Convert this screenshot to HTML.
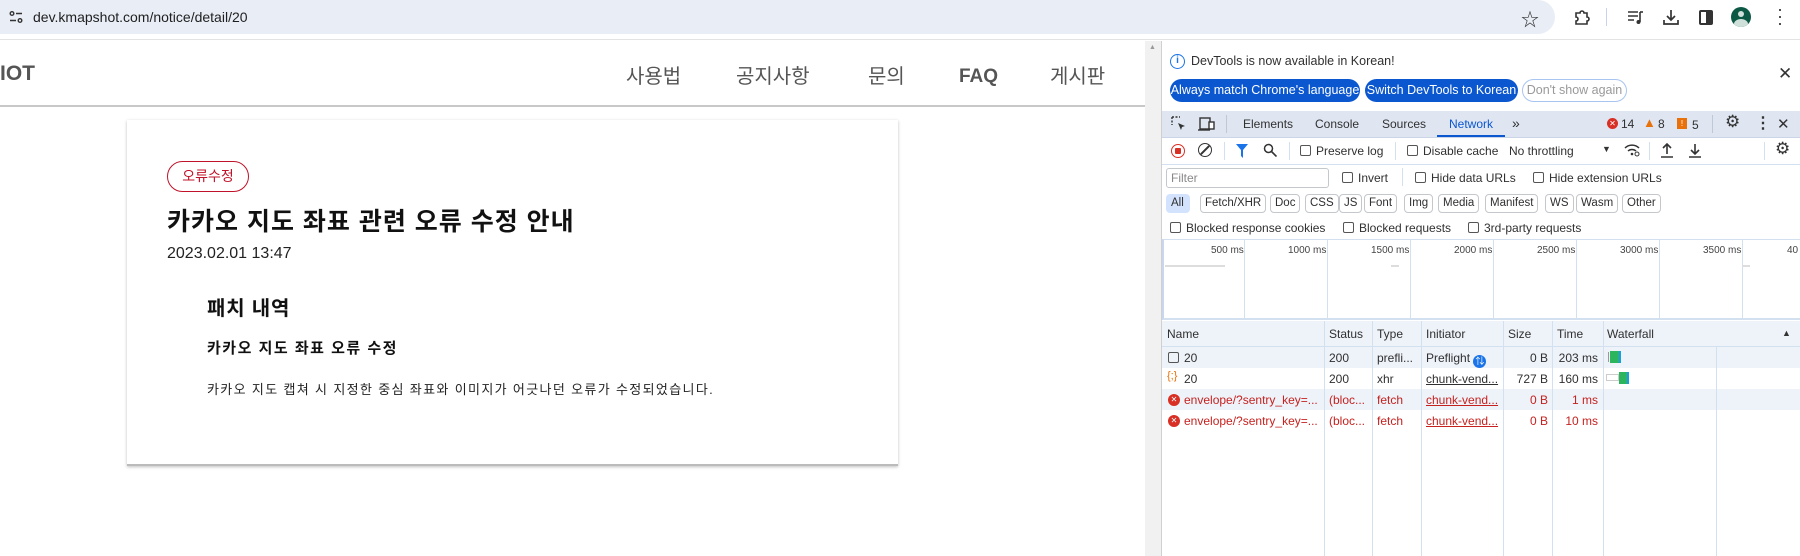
<!DOCTYPE html>
<html><head><meta charset="utf-8"><style>
*{box-sizing:border-box;margin:0;padding:0}
body{width:1800px;height:556px;overflow:hidden;background:#fff;font-family:"Liberation Sans","Noto Sans CJK KR",sans-serif;position:relative}
.a{position:absolute;white-space:nowrap}
.dt{font-family:"Liberation Sans","Noto Sans CJK KR",sans-serif;font-size:12px;color:#303030}
.cb{display:inline-block;width:11px;height:11px;border:1px solid #555;border-radius:2px;vertical-align:-1px;margin-right:5px}
.chip{position:absolute;top:194px;height:19px;border:1px solid #c4c7cc;border-radius:4px;font-size:11.5px;line-height:17px;padding:0 4px;color:#303030}
.vl{position:absolute;width:1px;background:#d3e0f0}
</style></head><body>
<!-- chrome top -->
<div class="a" style="left:0;top:0;width:1800px;height:40px;background:#fff;border-bottom:1px solid #e3e3e3"></div>
<div class="a" style="left:0;top:0;width:1555px;height:34px;background:#e9edf6;border-radius:0 17px 17px 0"></div>
<svg class="a" style="left:9px;top:10px" width="14" height="14" viewBox="0 0 14 14"><circle cx="3" cy="3.5" r="1.8" fill="none" stroke="#333" stroke-width="1.4"/><line x1="7" y1="3.5" x2="13" y2="3.5" stroke="#333" stroke-width="1.5"/><line x1="1" y1="10.5" x2="7" y2="10.5" stroke="#333" stroke-width="1.5"/><circle cx="11" cy="10.5" r="1.8" fill="none" stroke="#333" stroke-width="1.4"/></svg>
<div class="a" style="left:33px;top:9px;font-size:14px;color:#1f1f1f">dev.kmapshot.com/notice/detail/20</div>
<div class="a" style="left:1521px;top:6px;font-size:18px;color:#333">☆</div>
<svg class="a" style="left:1573px;top:9px" width="18" height="18" viewBox="0 0 18 18"><path d="M3 4h4a2 2 0 014 0h3v4a2 2 0 010 4v3H3v-3a2 2 0 000-4z" fill="none" stroke="#333" stroke-width="1.6"/></svg>
<div class="a" style="left:1606px;top:8px;width:1px;height:18px;background:#c8d3ea"></div>
<svg class="a" style="left:1627px;top:10px" width="18" height="16" viewBox="0 0 18 16"><path d="M1 2h10M1 6h10M1 10h6" stroke="#333" stroke-width="1.6"/><path d="M13 2v10" stroke="#333" stroke-width="1.6"/><circle cx="11.5" cy="12" r="2" fill="#333"/><path d="M13 2h3" stroke="#333" stroke-width="1.6"/></svg>
<svg class="a" style="left:1662px;top:8px" width="18" height="18" viewBox="0 0 18 18"><path d="M9 2v10M5 8l4 4 4-4M2 12v4h14v-4" fill="none" stroke="#333" stroke-width="1.7"/></svg>
<div class="a" style="left:1699px;top:10px;width:14px;height:15px;border:2px solid #333;border-radius:2px;background:linear-gradient(90deg,#fff 50%,#333 50%)"></div>
<div class="a" style="left:1731px;top:7px;width:20px;height:20px;border-radius:50%;background:#0b5844;overflow:hidden"><div style="position:absolute;left:7px;top:4px;width:6px;height:6px;border-radius:50%;background:#cfe0da"></div><div style="position:absolute;left:3px;top:12px;width:14px;height:10px;border-radius:50%;background:#cfe0da"></div></div>
<div class="a" style="left:1777px;top:6px;font-size:18px;line-height:7px;color:#333;width:4px">·<br>·<br>·</div>

<!-- page -->
<div class="a" style="left:0;top:62px;font-size:21px;font-weight:bold;color:#555">IOT</div>
<div class="a" style="left:626px;top:60px;font-size:20px;color:#555">사용법</div>
<div class="a" style="left:736px;top:60px;font-size:20px;color:#555">공지사항</div>
<div class="a" style="left:868px;top:60px;font-size:20px;color:#555">문의</div>
<div class="a" style="left:959px;top:66px;font-size:19px;font-weight:bold;color:#555">FAQ</div>
<div class="a" style="left:1050px;top:60px;font-size:20px;color:#555">게시판</div>
<div class="a" style="left:0;top:105px;width:1145px;height:2px;background:#c8c8c8"></div>
<div class="a" style="left:127px;top:120px;width:771px;height:346px;background:#fff;box-shadow:0 1px 3px rgba(0,0,0,.25);border-bottom:2px solid #bbb"></div>
<div class="a" style="left:167px;top:161px;width:82px;height:31px;border:1px solid #c0122a;border-radius:16px;color:#c0122a;font-size:14px;text-align:center;line-height:29px">오류수정</div>
<div class="a" style="left:167px;top:202px;font-size:25px;font-weight:bold;color:#111;letter-spacing:1px">카카오 지도 좌표 관련 오류 수정 안내</div>
<div class="a" style="left:167px;top:245px;font-size:16px;color:#222">2023.02.01 13:47</div>
<div class="a" style="left:207px;top:292px;font-size:20px;font-weight:bold;color:#111;letter-spacing:0.8px">패치 내역</div>
<div class="a" style="left:207px;top:337px;font-size:15px;font-weight:bold;color:#111;letter-spacing:1.5px">카카오 지도 좌표 오류 수정</div>
<div class="a" style="left:207px;top:379px;font-size:13px;color:#222;letter-spacing:1.35px">카카오 지도 캡쳐 시 지정한 중심 좌표와 이미지가 어긋나던 오류가 수정되었습니다.</div>
<div class="a" style="left:1145px;top:41px;width:16px;height:515px;background:#f1f1f1"></div>
<div class="a" style="left:1149px;top:44px;font-size:7px;color:#999">▲</div>

<!-- devtools -->
<div class="a dt" style="left:1161px;top:41px;width:639px;height:515px;background:#fff;border-left:1px solid #d0d0d0"></div>
<div class="a" style="left:1170px;top:54px;width:15px;height:15px;border:1.5px solid #1a73e8;border-radius:50%;color:#1a73e8;font-size:10px;text-align:center;line-height:12px;font-weight:bold">i</div>
<div class="a dt" style="left:1191px;top:54px;font-size:12.5px">DevTools is now available in Korean!</div>
<div class="a" style="left:1170px;top:79px;width:190px;height:23px;background:#0b57d0;border-radius:12px;color:#fff;font-size:12.5px;line-height:23px;text-align:center">Always match Chrome's language</div>
<div class="a" style="left:1365px;top:79px;width:153px;height:23px;background:#0b57d0;border-radius:12px;color:#fff;font-size:12.5px;line-height:23px;text-align:center">Switch DevTools to Korean</div>
<div class="a" style="left:1522px;top:79px;width:105px;height:23px;border:1px solid #a8c4f0;border-radius:12px;color:#999;font-size:12.5px;line-height:21px;text-align:center">Don't show again</div>
<div class="a" style="left:1778px;top:64px;font-size:17px;color:#333">✕</div>

<div class="a" style="left:1162px;top:111px;width:638px;height:27px;background:#dfe6f2;border-bottom:1px solid #cad6e8"></div>
<svg class="a" style="left:1171px;top:116px" width="16" height="16" viewBox="0 0 16 16"><path d="M1 1h8M1 1v8" stroke="#333" stroke-width="1.4" stroke-dasharray="2 1.5"/><path d="M7 7l7 3-3 1-1 3z" fill="#333"/></svg>
<svg class="a" style="left:1198px;top:116px" width="18" height="16" viewBox="0 0 18 16"><rect x="2" y="2" width="10" height="11" fill="none" stroke="#333" stroke-width="1.4"/><rect x="11" y="6" width="5" height="7" fill="#fff" stroke="#333" stroke-width="1.4"/><path d="M0 14h12" stroke="#333" stroke-width="1.4"/></svg>
<div class="a" style="left:1226px;top:115px;width:1px;height:18px;background:#c0c8d8"></div>
<div class="a dt" style="left:1243px;top:117px">Elements</div>
<div class="a dt" style="left:1315px;top:117px">Console</div>
<div class="a dt" style="left:1382px;top:117px">Sources</div>
<div class="a dt" style="left:1449px;top:117px;color:#0b57d0">Network</div>
<div class="a" style="left:1437px;top:135px;width:68px;height:2px;background:#0b57d0"></div>
<div class="a dt" style="left:1512px;top:115px;font-size:14px">»</div>
<div class="a" style="left:1607px;top:118px;width:11px;height:11px;border-radius:50%;background:#d93025;color:#fff;font-size:8px;line-height:11px;text-align:center">✕</div>
<div class="a dt" style="left:1621px;top:117px">14</div>
<div class="a" style="left:1643px;top:115px;color:#e8710a;font-size:13px">▲</div>
<div class="a dt" style="left:1658px;top:117px">8</div>
<div class="a" style="left:1677px;top:118px;width:10px;height:11px;background:#e8710a;color:#fff;font-size:8px;line-height:11px;text-align:center">!</div>
<div class="a dt" style="left:1692px;top:118px">5</div>
<div class="a" style="left:1712px;top:115px;width:1px;height:18px;background:#c0c8d8"></div>
<div class="a" style="left:1725px;top:112px;font-size:17px;color:#333">⚙</div>
<div class="a" style="left:1755px;top:113px;font-size:16px;font-weight:bold;color:#333">⋮</div>
<div class="a" style="left:1777px;top:115px;font-size:15px;color:#333">✕</div>

<div class="a" style="left:1162px;top:164px;width:638px;height:1px;background:#d3e0f0"></div>
<div class="a" style="left:1171px;top:144px;width:14px;height:14px;border:1.5px solid #d93025;border-radius:50%"><div style="margin:2.5px;width:6px;height:6px;background:#d93025;border-radius:1px"></div></div>
<div class="a" style="left:1198px;top:143px;width:14px;height:14px;border:1.5px solid #333;border-radius:50%;overflow:hidden"><div style="position:absolute;left:5px;top:-2px;width:1.5px;height:16px;background:#333;transform:rotate(45deg)"></div></div>
<div class="a" style="left:1224px;top:142px;width:1px;height:18px;background:#d3e0f0"></div>
<svg class="a" style="left:1236px;top:144px" width="12" height="14" viewBox="0 0 12 14"><path d="M0 0h12L7 6v8L5 12V6z" fill="#1a73e8"/></svg>
<svg class="a" style="left:1263px;top:143px" width="14" height="14" viewBox="0 0 14 14"><circle cx="5.5" cy="5.5" r="4" fill="none" stroke="#333" stroke-width="1.5"/><path d="M8.5 8.5l5 5" stroke="#333" stroke-width="1.6"/></svg>
<div class="a" style="left:1289px;top:142px;width:1px;height:18px;background:#d3e0f0"></div>
<div class="a dt" style="left:1300px;top:144px"><span class="cb"></span>Preserve log</div>
<div class="a" style="left:1395px;top:142px;width:1px;height:18px;background:#d3e0f0"></div>
<div class="a dt" style="left:1407px;top:144px"><span class="cb"></span>Disable cache</div>
<div class="a dt" style="left:1509px;top:144px">No throttling</div>
<div class="a" style="left:1602px;top:144px;font-size:9px;color:#333">▼</div>
<svg class="a" style="left:1624px;top:143px" width="16" height="14" viewBox="0 0 16 14"><path d="M1 5a10 10 0 0114 0M4 8a6 6 0 018 0" fill="none" stroke="#333" stroke-width="1.5"/><circle cx="8" cy="11" r="1.3" fill="#333"/><circle cx="13" cy="11" r="2" fill="none" stroke="#333"/></svg>
<div class="a" style="left:1649px;top:142px;width:1px;height:18px;background:#d3e0f0"></div>
<svg class="a" style="left:1660px;top:142px" width="14" height="16" viewBox="0 0 14 16"><path d="M7 12V2M3 6l4-4 4 4M1 15h12" fill="none" stroke="#333" stroke-width="1.6"/></svg>
<svg class="a" style="left:1688px;top:142px" width="14" height="16" viewBox="0 0 14 16"><path d="M7 2v10M3 8l4 4 4-4M1 15h12" fill="none" stroke="#333" stroke-width="1.6"/></svg>
<div class="a" style="left:1764px;top:142px;width:1px;height:18px;background:#d3e0f0"></div>
<div class="a" style="left:1775px;top:139px;font-size:17px;color:#333">⚙</div>

<div class="a" style="left:1166px;top:168px;width:163px;height:20px;border:1px solid #c4c7cc;border-radius:3px;font-size:12px;color:#888;padding:2px 4px">Filter</div>
<div class="a dt" style="left:1342px;top:171px"><span class="cb"></span>Invert</div>
<div class="a" style="left:1402px;top:168px;width:1px;height:18px;background:#d3e0f0"></div>
<div class="a dt" style="left:1415px;top:171px"><span class="cb"></span>Hide data URLs</div>
<div class="a dt" style="left:1533px;top:171px"><span class="cb"></span>Hide extension URLs</div>

<div class="chip" style="left:1166px;width:24px;background:#d3e3fd;border-color:#d3e3fd">All</div>
<div class="chip" style="left:1200px">Fetch/XHR</div>
<div class="chip" style="left:1270px">Doc</div>
<div class="chip" style="left:1305px">CSS</div>
<div class="chip" style="left:1339px">JS</div>
<div class="chip" style="left:1364px">Font</div>
<div class="chip" style="left:1404px">Img</div>
<div class="chip" style="left:1438px">Media</div>
<div class="chip" style="left:1485px">Manifest</div>
<div class="chip" style="left:1545px">WS</div>
<div class="chip" style="left:1576px">Wasm</div>
<div class="chip" style="left:1622px">Other</div>

<div class="a dt" style="left:1170px;top:221px"><span class="cb"></span>Blocked response cookies</div>
<div class="a dt" style="left:1343px;top:221px"><span class="cb"></span>Blocked requests</div>
<div class="a dt" style="left:1468px;top:221px"><span class="cb"></span>3rd-party requests</div>

<div class="a" style="left:1162px;top:239px;width:638px;height:81px;border-top:1px solid #d3e0f0;border-bottom:2px solid #d3e0f0;border-left:2px solid #c8d6f0"></div>
<div class="vl" style="left:1244px;top:240px;height:80px"></div>
<div class="vl" style="left:1327px;top:240px;height:80px"></div>
<div class="vl" style="left:1410px;top:240px;height:80px"></div>
<div class="vl" style="left:1493px;top:240px;height:80px"></div>
<div class="vl" style="left:1576px;top:240px;height:80px"></div>
<div class="vl" style="left:1659px;top:240px;height:80px"></div>
<div class="vl" style="left:1742px;top:240px;height:80px"></div>
<div class="a" style="left:1211px;top:245px;font-size:10px;color:#444">500 ms</div>
<div class="a" style="left:1288px;top:245px;font-size:10px;color:#444">1000 ms</div>
<div class="a" style="left:1371px;top:245px;font-size:10px;color:#444">1500 ms</div>
<div class="a" style="left:1454px;top:245px;font-size:10px;color:#444">2000 ms</div>
<div class="a" style="left:1537px;top:245px;font-size:10px;color:#444">2500 ms</div>
<div class="a" style="left:1620px;top:245px;font-size:10px;color:#444">3000 ms</div>
<div class="a" style="left:1703px;top:245px;font-size:10px;color:#444">3500 ms</div>
<div class="a" style="left:1787px;top:245px;font-size:10px;color:#444">40</div>
<div class="a" style="left:1165px;top:265px;width:60px;height:2px;background:#ddd"></div>
<div class="a" style="left:1391px;top:265px;width:8px;height:2px;background:#ddd"></div>
<div class="a" style="left:1742px;top:265px;width:8px;height:2px;background:#ddd"></div>

<div class="a" style="left:1162px;top:321px;width:638px;height:26px;background:#eef2f9;border-bottom:1px solid #d3e0f0"></div>
<div class="a" style="left:1162px;top:347px;width:638px;height:21px;background:#eef2f9"></div>
<div class="a" style="left:1162px;top:389px;width:638px;height:21px;background:#eef2f9"></div>
<div class="vl" style="left:1324px;top:321px;height:235px"></div>
<div class="vl" style="left:1372px;top:321px;height:235px"></div>
<div class="vl" style="left:1421px;top:321px;height:235px"></div>
<div class="vl" style="left:1503px;top:321px;height:235px"></div>
<div class="vl" style="left:1552px;top:321px;height:235px"></div>
<div class="vl" style="left:1603px;top:321px;height:235px"></div>
<div class="vl" style="left:1716px;top:347px;height:209px"></div>
<div class="a dt" style="left:1167px;top:327px">Name</div>
<div class="a dt" style="left:1329px;top:327px">Status</div>
<div class="a dt" style="left:1377px;top:327px">Type</div>
<div class="a dt" style="left:1426px;top:327px">Initiator</div>
<div class="a dt" style="left:1508px;top:327px">Size</div>
<div class="a dt" style="left:1557px;top:327px">Time</div>
<div class="a dt" style="left:1607px;top:327px">Waterfall</div>
<div class="a" style="left:1782px;top:328px;font-size:9px;color:#333">▲</div>

<div class="a" style="left:1168px;top:352px;width:11px;height:11px;border:1.5px solid #555;border-radius:2px"></div>
<div class="a dt" style="left:1184px;top:351px">20</div>
<div class="a dt" style="left:1329px;top:351px">200</div>
<div class="a dt" style="left:1377px;top:351px">prefli...</div>
<div class="a dt" style="left:1426px;top:351px">Preflight <span style="display:inline-block;width:13px;height:13px;border-radius:50%;background:#1a73e8;color:#fff;font-size:9px;line-height:13px;text-align:center;vertical-align:-2px">⇅</span></div>
<div class="a dt" style="left:1503px;top:351px;width:45px;text-align:right">0 B</div>
<div class="a dt" style="left:1552px;top:351px;width:46px;text-align:right">203 ms</div>
<div class="a" style="left:1608px;top:352px;width:1px;height:10px;background:#999"></div>
<div class="a" style="left:1610px;top:351px;width:9px;height:12px;background:#2db55d"></div>
<div class="a" style="left:1619px;top:351px;width:2px;height:12px;background:#1a9bf0"></div>

<div class="a" style="left:1167px;top:370px;font-size:11px;color:#e8710a">{;}</div>
<div class="a dt" style="left:1184px;top:372px">20</div>
<div class="a dt" style="left:1329px;top:372px">200</div>
<div class="a dt" style="left:1377px;top:372px">xhr</div>
<div class="a dt" style="left:1426px;top:372px;text-decoration:underline">chunk-vend...</div>
<div class="a dt" style="left:1503px;top:372px;width:45px;text-align:right">727 B</div>
<div class="a dt" style="left:1552px;top:372px;width:46px;text-align:right">160 ms</div>
<div class="a" style="left:1606px;top:374px;width:13px;height:7px;border:1px solid #ccc"></div>
<div class="a" style="left:1619px;top:372px;width:8px;height:12px;background:#2db55d"></div>
<div class="a" style="left:1627px;top:372px;width:2px;height:12px;background:#1a9bf0"></div>

<div class="a" style="left:1168px;top:394px;width:12px;height:12px;border-radius:50%;background:#d93025;color:#fff;font-size:8px;line-height:12px;text-align:center">✕</div>
<div class="a dt" style="left:1184px;top:393px;color:#c5221f">envelope/?sentry_key=...</div>
<div class="a dt" style="left:1329px;top:393px;color:#c5221f">(bloc...</div>
<div class="a dt" style="left:1377px;top:393px;color:#c5221f">fetch</div>
<div class="a dt" style="left:1426px;top:393px;color:#c5221f;text-decoration:underline">chunk-vend...</div>
<div class="a dt" style="left:1503px;top:393px;width:45px;text-align:right;color:#c5221f">0 B</div>
<div class="a dt" style="left:1552px;top:393px;width:46px;text-align:right;color:#c5221f">1 ms</div>

<div class="a" style="left:1168px;top:415px;width:12px;height:12px;border-radius:50%;background:#d93025;color:#fff;font-size:8px;line-height:12px;text-align:center">✕</div>
<div class="a dt" style="left:1184px;top:414px;color:#c5221f">envelope/?sentry_key=...</div>
<div class="a dt" style="left:1329px;top:414px;color:#c5221f">(bloc...</div>
<div class="a dt" style="left:1377px;top:414px;color:#c5221f">fetch</div>
<div class="a dt" style="left:1426px;top:414px;color:#c5221f;text-decoration:underline">chunk-vend...</div>
<div class="a dt" style="left:1503px;top:414px;width:45px;text-align:right;color:#c5221f">0 B</div>
<div class="a dt" style="left:1552px;top:414px;width:46px;text-align:right;color:#c5221f">10 ms</div>
</body></html>
